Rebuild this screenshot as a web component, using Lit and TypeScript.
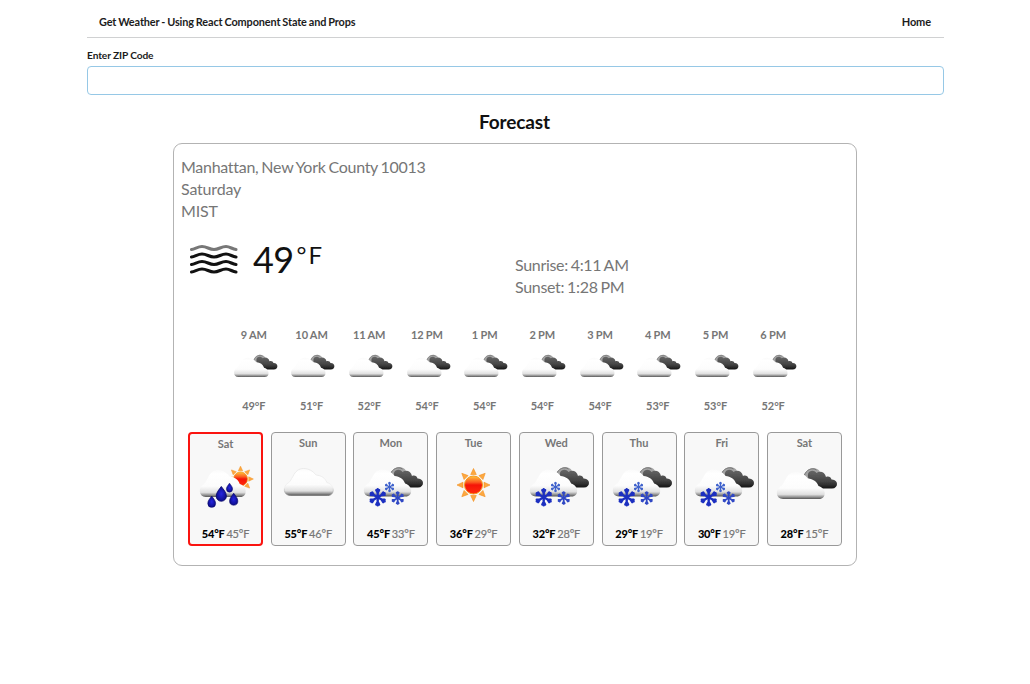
import { LitElement, html, css, svg } from "lit";
import { customElement, property } from "lit/decorators.js";

const CLOUD =
  "M6 27C-1.5 27-2 17.500 3.500 14.500C6 13 6.500 10.500 8.500 7.500C10.500 3 14 0 18.500 0C24 0 27.500 2.500 31 6.500C36 7 40 9.500 41.500 14C49.500 16 50 27 42 27Z";
const DROP = "M0-7C2.500-3.500 5-1 5 2.500A5 5 0 0 1-5 2.500C-5-1-2.500-3.500 0-7Z";

type Kind = "rain" | "cloud" | "snow" | "sun" | "broken";

@customElement("weather-icon")
export class WeatherIcon extends LitElement {
  @property() kind: Kind = "cloud";

  static styles = css`
    :host { display: block; }
    svg { display: block; width: 100%; height: 100%; overflow: visible; }
  `;

  private cloud(x: number, y: number, w = 48, h = 27, rim = "none") {
    return svg`<path d=${CLOUD} fill="url(#white)" stroke=${rim} stroke-width=".8" filter="url(#soft)"
      transform="translate(${x} ${y}) scale(${w / 48} ${h / 27})"/>`;
  }

  private dark(y: number) {
    return svg`<g transform="translate(0 ${y})" filter="url(#soft)">
      <path d="M36 11C38 3 45-1 50 2C54 4 54 8 53 12L44 14Z" fill="#a4a4a4"/>
      <path d="M37.500 8C39 3 45 0 49.500 3" fill="none" stroke="#777" stroke-width="1"/>
      <path d="M41 7C42 3.500 47 2.500 49.500 6C53 3.500 58 5 59 10C61.500 9 64 10 64.500 12.500C71.500 12 72 21.500 65 21.500H53C49 21.500 48 18.500 48 16.500C44 15 40 12 41 7Z" fill="url(#black)"/>
    </g>`;
  }

  private sun(cx: number, cy: number, s: number) {
    return svg`<g transform="translate(${cx} ${cy}) scale(${s})">
      ${[0, 45, 90, 135, 180, 225, 270, 315].map(
        (a) => svg`<path d="M0-16.500L2.800-10.500H-2.800Z" fill="#fda840" stroke="#f29020" stroke-width=".6" transform="rotate(${a})"/>`
      )}
      <circle r="9" fill="url(#hot)" stroke="#f59a1c" stroke-width="1"/>
    </g>`;
  }

  private drop(x: number, y: number, s: number) {
    return svg`<path d=${DROP} fill="url(#water)" stroke="#080868" stroke-width=".8" transform="translate(${x} ${y}) scale(${s})"/>`;
  }

  private flake(x: number, y: number, s: number, color: string) {
    return svg`<g transform="translate(${x} ${y}) scale(${s})" stroke=${color} stroke-width="2.400" fill="none" stroke-linecap="round" stroke-linejoin="round">
      ${[0, 60, 120, 180, 240, 300].map(
        (a) => svg`<path d="M0 0V-8M-1.400-7.200L0-4.600L1.400-7.200Z" transform="rotate(${a})"/>`
      )}
    </g>`;
  }

  private art() {
    switch (this.kind) {
      case "rain":
        return svg`${this.sun(52.5, 19, 0.78)}${this.cloud(12, 10, 46, 27)}
          ${this.drop(23.7, 41.5, 0.78)}${this.drop(33.3, 33.6, 1.02)}
          ${this.drop(41.5, 27.5, 0.62)}${this.drop(45.7, 39, 0.82)}`;
      case "cloud":
        return this.cloud(13.5, 8.5, 49, 27, "url(#rim)");
      case "snow":
        return svg`${this.dark(6)}${this.cloud(11, 9.5, 47.5, 27)}
          ${this.flake(36.5, 27, 0.56, "#3f62cc")}
          ${this.flake(24.7, 37.3, 1, "#1c2fc0")}${this.flake(44.7, 38, 0.74, "#3048c4")}`;
      case "sun":
        return this.sun(37.5, 25, 1);
      default:
        return svg`${this.dark(7)}${this.cloud(10, 12)}`;
    }
  }

  render() {
    return html`<svg viewBox="0 0 75 50" aria-hidden="true">
      <defs>
        <linearGradient id="white" x2="0" y2="1">
          <stop offset="0" stop-color="#fafafa"/><stop offset=".15" stop-color="#fff"/>
          <stop offset=".6" stop-color="#fcfcfc"/><stop offset=".83" stop-color="#e0e0e0"/>
          <stop offset=".92" stop-color="#999"/><stop offset="1" stop-color="#555"/>
        </linearGradient>
        <linearGradient id="rim" x2="0" y2="1">
          <stop offset="0" stop-color="#e6e6e6"/><stop offset=".7" stop-color="#efefef"/><stop offset="1" stop-color="#777"/>
        </linearGradient>
        <linearGradient id="black" x2="0" y2="1">
          <stop offset="0" stop-color="#666"/><stop offset=".6" stop-color="#444"/><stop offset="1" stop-color="#161616"/>
        </linearGradient>
        <linearGradient id="hot" x2="0" y2="1">
          <stop offset="0" stop-color="#ffc53a"/><stop offset=".35" stop-color="#fb5a20"/>
          <stop offset=".5" stop-color="#f51408"/><stop offset="1" stop-color="#ff2c0c"/>
        </linearGradient>
        <radialGradient id="water">
          <stop offset="0" stop-color="#2626e0"/><stop offset="1" stop-color="#0d0d8c"/>
        </radialGradient>
        <filter id="soft" x="-10%" y="-10%" width="120%" height="120%"><feGaussianBlur stdDeviation=".45"/></filter>
      </defs>
      ${this.art()}
    </svg>`;
  }
}

const HOURS: [string, number][] = [
  ["9 AM", 49], ["10 AM", 51], ["11 AM", 52], ["12 PM", 54], ["1 PM", 54],
  ["2 PM", 54], ["3 PM", 54], ["4 PM", 53], ["5 PM", 53], ["6 PM", 52],
];

const DAYS: [string, Kind, number, number][] = [
  ["Sat", "rain", 54, 45], ["Sun", "cloud", 55, 46], ["Mon", "snow", 45, 33], ["Tue", "sun", 36, 29],
  ["Wed", "snow", 32, 28], ["Thu", "snow", 29, 19], ["Fri", "snow", 30, 19], ["Sat", "broken", 28, 15],
];

@customElement("app-root")
export class AppRoot extends LitElement {
  static styles = css`
    :host {
      display: block; min-height: 684px; background: #fff; color: #1c1c1c;
      font-family: Lato, sans-serif; font-size: 11px; line-height: 16px;
    }
    * { box-sizing: border-box; }
    .page { width: 857px; margin-left: 87px; }
    header {
      display: flex; justify-content: space-between; height: 38px; padding: 14px 12px 0;
      border-bottom: 1px solid #d0d1d2; font-weight: 700;
    }
    .title { font-size: 10.900px; letter-spacing: -.12px; word-spacing: -.55px; }
    .home { letter-spacing: -.1px; margin-right: 1px; }
    .field { display: block; padding-top: 10px; font-size: 10.200px; line-height: 15px; font-weight: 700; letter-spacing: -.12px; }
    input {
      display: block; width: 857px; height: 29px; margin: 3px 0 0; padding: 0 10px;
      border: 1px solid #96c8e6; border-radius: 4px; outline: none; font: inherit;
    }
    h2 { margin: 14px 2px 0 0; text-align: center; font-size: 19px; line-height: 26px; font-weight: 700; letter-spacing: -.15px; color: #111; }
    .panel {
      width: 684px; height: 423px; margin: 8px 0 0 86px; padding: 12px 14px 0;
      border: 1px solid #b3b3b3; border-radius: 9px; color: #767676;
    }
    .place { margin-left: -7px; font-size: 16px; line-height: 22px; letter-spacing: -.19px; }
    .city { letter-spacing: -.28px; word-spacing: -.9px; }
    .now { display: flex; height: 72px; margin-top: 12px; }
    .current { display: flex; width: 327px; padding-left: 1px; color: #111; }
    .mist { width: 50px; height: 32px; margin-top: 10px; }
    .temp { margin-left: 14px; font-size: 36px; line-height: 50px; display: flex; }
    .num { letter-spacing: -.6px; }
    .unit { font-size: 24px; line-height: 42px; margin-left: 3px; letter-spacing: 2px; }
    .times { padding-top: 20px; font-size: 16px; line-height: 22px; letter-spacing: -.32px; word-spacing: -.9px; }
    .hours { display: grid; grid-template-columns: repeat(10, 1fr); width: 577px; margin: 21px 0 0 37px; text-align: center; font-weight: 700; font-size: 11px; letter-spacing: -.08px; word-spacing: -.3px; }
    .hours weather-icon { width: 54px; height: 36px; margin: 6px auto 13px 1.500px; }
    .days { display: grid; grid-template-columns: repeat(8, 75px); justify-content: space-between; width: 654px; margin-top: 17.500px; }
    .day {
      height: 114px; border: 1px solid #999; border-radius: 4px; background: #f8f8f8;
      text-align: center; font-weight: 700; padding-top: 2.500px;
    }
    .day.active { border: 2px solid #fa1410; height: 113.500px; margin-top: .5px; padding-top: 1.500px; }
    .day weather-icon { width: 75px; height: 50px; margin: 9px 0 16px -1px; }
    .active weather-icon { margin: 8px 0 16px -2px; }
    .range { font-size: 11px; white-space: nowrap; letter-spacing: -.15px; word-spacing: -.8px; }
    .high { color: #000; font-weight: 900; }
    .low { font-weight: 400; -webkit-text-stroke: .2px #767676; }
  `;

  render() {
    return html`<div class="page">
      <header><span class="title">Get Weather - Using React Component State and Props</span><span class="home">Home</span></header>
      <label class="field">Enter ZIP Code<input type="text" /></label>
      <h2>Forecast</h2>
      <section class="panel">
        <div class="place"><div class="city">Manhattan, New York County 10013</div><div>Saturday</div><div>MIST</div></div>
        <div class="now">
          <div class="current">
            <svg class="mist" viewBox="0 0 50 32" fill="none" stroke="#111" stroke-width="3.100" stroke-linecap="round">
              ${[0, 1, 2, 3].map((i) => svg`<path
                d="M2.500 5.500C6 5 9 2.500 13 2.500C18 2.500 20 5.500 25 5.500C30 5.500 32 2.500 37 2.500C41 2.500 43 5 47 5.500"
                transform="translate(0 ${[0, 7.5, 15, 22.5][i]})" stroke=${i ? "#111" : "#777"}/>`)}
            </svg>
            <div class="temp"><span class="num">49</span><span class="unit">°F</span></div>
          </div>
          <div class="times"><div class="rise">Sunrise: 4:11 AM</div><div>Sunset: 1:28 PM</div></div>
        </div>
        <div class="hours">
          ${HOURS.map(([h, t]) => html`<div><div>${h}</div><weather-icon kind="broken"></weather-icon><div>${t}°F</div></div>`)}
        </div>
        <div class="days">
          ${DAYS.map(([d, k, hi, lo], i) => html`<div class="day ${i === 0 ? "active" : ""}">
            <div>${d}</div><weather-icon kind=${k}></weather-icon>
            <div class="range"><span class="high">${hi}°F</span> <span class="low">${lo}°F</span></div>
          </div>`)}
        </div>
      </section>
    </div>`;
  }
}
